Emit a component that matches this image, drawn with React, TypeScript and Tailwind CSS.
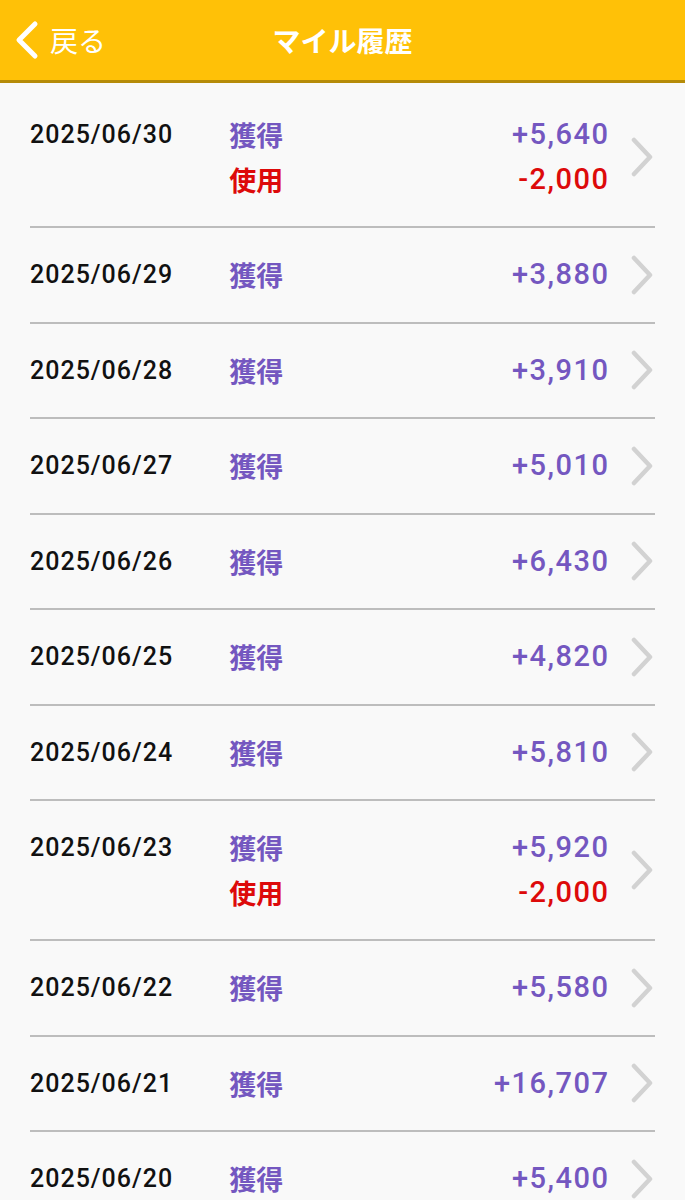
import React from 'react';

type Line = { kind: 'earn' | 'use'; amount: string };
type Entry = { date: string; lines: Line[] };

const HISTORY: Entry[] = [
  { date: '2025/06/30', lines: [{ kind: 'earn', amount: '+5,640' }, { kind: 'use', amount: '-2,000' }] },
  { date: '2025/06/29', lines: [{ kind: 'earn', amount: '+3,880' }] },
  { date: '2025/06/28', lines: [{ kind: 'earn', amount: '+3,910' }] },
  { date: '2025/06/27', lines: [{ kind: 'earn', amount: '+5,010' }] },
  { date: '2025/06/26', lines: [{ kind: 'earn', amount: '+6,430' }] },
  { date: '2025/06/25', lines: [{ kind: 'earn', amount: '+4,820' }] },
  { date: '2025/06/24', lines: [{ kind: 'earn', amount: '+5,810' }] },
  { date: '2025/06/23', lines: [{ kind: 'earn', amount: '+5,920' }, { kind: 'use', amount: '-2,000' }] },
  { date: '2025/06/22', lines: [{ kind: 'earn', amount: '+5,580' }] },
  { date: '2025/06/21', lines: [{ kind: 'earn', amount: '+16,707' }] },
  { date: '2025/06/20', lines: [{ kind: 'earn', amount: '+5,400' }] },
];

const font = { fontFamily: 'Roboto, "Noto Sans CJK JP", sans-serif' };
const jp = { fontFamily: '"Noto Sans CJK JP", sans-serif' };

const Chevron = () => (
  <svg width="24" height="40" viewBox="0 0 24 40" fill="none">
    <path d="M4 3 L20 20 L4 37" stroke="#d2d2d2" strokeWidth="4.5" strokeLinecap="round" strokeLinejoin="round" />
  </svg>
);

const Row = ({ entry }: { entry: Entry }) => {
  const double = entry.lines.length > 1;
  return (
    <div className={`flex items-center border-b-2 border-[#bdbdbd] ${double ? 'h-[140px]' : 'h-[95.5px]'}`}>
      <div className="flex flex-1 items-start">
        <div className="text-[25px] font-medium leading-[45px] tracking-[1px] text-[#111]">{entry.date}</div>
        <div className="ml-[56px] flex flex-1 flex-col">
          {entry.lines.map((l, i) => (
            <div key={i} className="flex items-center justify-between leading-[45px]">
              <span
                className={`text-[27px] font-bold ${l.kind === 'earn' ? 'text-[#7457c0]' : 'text-[#dd0a0a]'}`}
                style={jp}
              >
                {l.kind === 'earn' ? '獲得' : '使用'}
              </span>
              <span
                className={`mr-[-1.5px] text-[29px] font-medium tracking-[1.5px] ${l.kind === 'earn' ? 'text-[#7457c0]' : 'text-[#dd0a0a]'}`}
              >
                {l.amount}
              </span>
            </div>
          ))}
        </div>
      </div>
      <div className="ml-[22px] mr-[1px] flex items-center">
        <Chevron />
      </div>
    </div>
  );
};

export default function App() {
  return (
    <div className="min-h-[1200px] bg-[#f9f9f9]" style={font}>
      <header className="relative flex h-[83px] items-center justify-center border-b-[3px] border-[#b58b08] bg-[#ffc107]">
        <div className="absolute left-[14px] top-0 flex h-full items-center gap-[10px] text-white">
          <svg width="26" height="40" viewBox="0 0 26 40" fill="none">
            <path d="M21 4 L5 20 L21 36" stroke="#fff" strokeWidth="5" strokeLinecap="round" strokeLinejoin="round" />
          </svg>
          <span className="text-[28px]" style={jp}>戻る</span>
        </div>
        <h1 className="text-[28px] font-bold text-white" style={jp}>
          マイル履歴
        </h1>
      </header>
      <div className="px-[30px] pt-[5px]">
        {HISTORY.map((e) => (
          <Row key={e.date} entry={e} />
        ))}
      </div>
    </div>
  );
}
